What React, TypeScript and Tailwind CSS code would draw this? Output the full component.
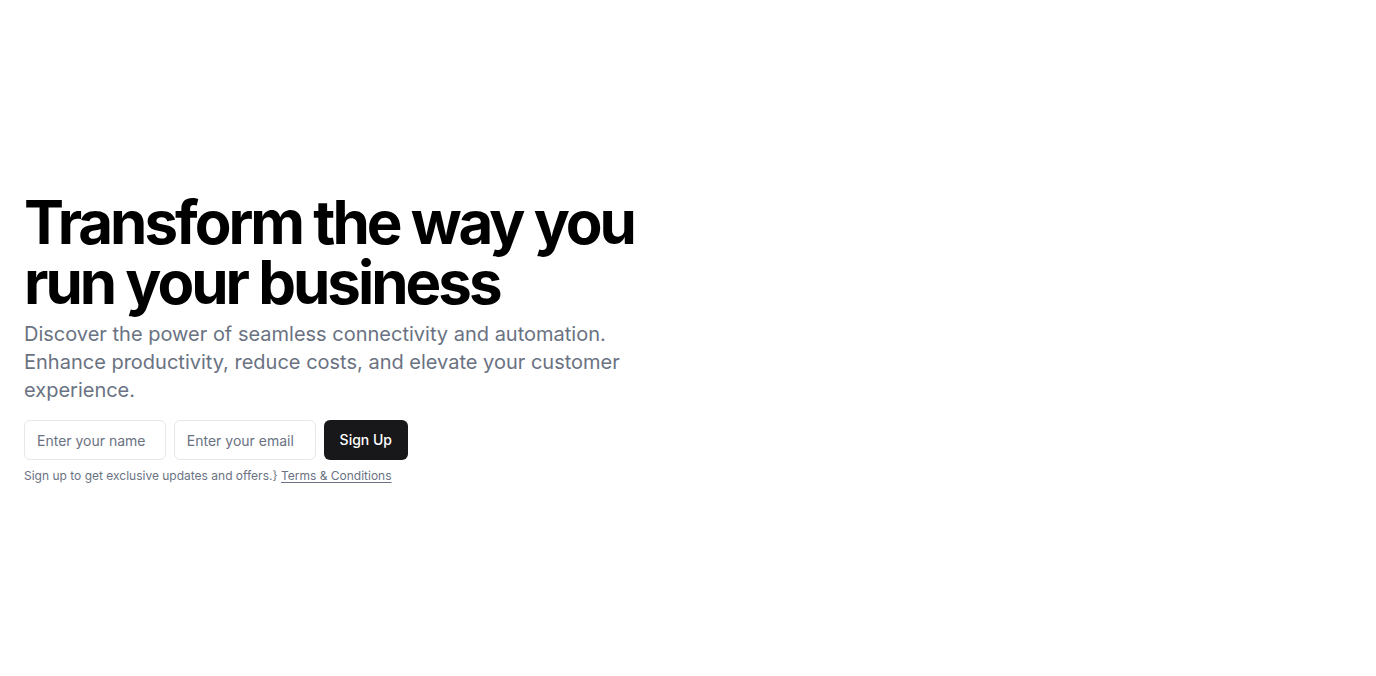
export default function App() {
  return (
    <section
      className="w-full bg-white py-48"
      style={{ fontFamily: "Inter, 'Noto Sans', sans-serif" }}
    >
      <div className="px-6">
        <div className="flex flex-col items-start space-y-4">
          <div className="space-y-2">
            <h1 className="text-6xl/none font-bold tracking-tighter text-black">
              Transform the way you
              <br />
              run your business
            </h1>
            <p className="max-w-[600px] text-xl text-gray-500">
              Discover the power of seamless connectivity and automation.
              Enhance productivity, reduce costs, and elevate your customer
              experience.
            </p>
          </div>
          <div className="w-full max-w-sm space-y-2">
            <form className="flex space-x-2">
              <input
                className="h-10 w-full min-w-0 flex-1 rounded-md border border-gray-200 bg-white px-3 py-2 text-sm placeholder:text-gray-500 focus:outline-none"
                placeholder="Enter your name"
                type="text"
              />
              <input
                className="h-10 w-full min-w-0 flex-1 rounded-md border border-gray-200 bg-white px-3 py-2 text-sm placeholder:text-gray-500 focus:outline-none"
                placeholder="Enter your email"
                type="email"
              />
              <button
                type="submit"
                className="h-10 shrink-0 rounded-md bg-[#18181b] px-4 text-sm font-medium text-white"
              >
                Sign Up
              </button>
            </form>
            <p className="whitespace-nowrap text-xs text-gray-500">
              {"Sign up to get exclusive updates and offers.} "}
              <a href="#" className="underline underline-offset-2">
                Terms &amp; Conditions
              </a>
            </p>
          </div>
        </div>
      </div>
    </section>
  );
}
